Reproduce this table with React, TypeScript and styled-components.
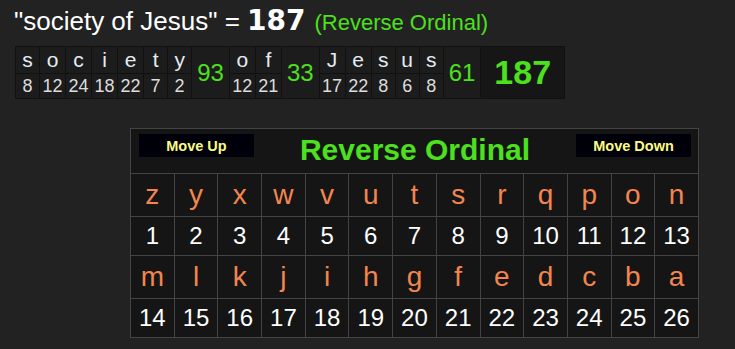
import React from 'react'
import styled, { createGlobalStyle } from 'styled-components'

const GlobalStyle = createGlobalStyle`
  body {
    margin: 0;
    background: #222222;
    font-family: "Liberation Sans", Arial, sans-serif;
  }
`

const Page = styled.div`
  display: flex;
  flex-direction: column;
  padding: 0 0 0 15px;
`

const Header = styled.div`
  display: flex;
  align-items: baseline;
  height: 39px;
  padding-top: 2px;
  color: #ffffff;
  font-size: 26px;
  line-height: 38px;
  margin-left: -1px;
  white-space: pre;
`

const Total = styled.span`
  font-family: "DejaVu Sans", "Liberation Sans", sans-serif;
  font-size: 28px;
  font-weight: bold;
`

const CipherName = styled.span`
  margin-left: 9px;
  color: #4ce01e;
  font-size: 22px;
`

const Breakdown = styled.table`
  border-collapse: collapse;
  margin-top: 5px;
  background: #1c1c1c;
  border: 1px solid #111111;

  td {
    border: 1px solid #111111;
    padding: 0 2.5px;
    text-align: center;
  }
`

const LetterCell = styled.td`
  min-width: 18px;
  height: 26px;
  color: #e4ecf2;
  font-size: 21px;
  line-height: 26px;
`

const NumberCell = styled.td`
  min-width: 18px;
  height: 24px;
  color: #dddddd;
  font-size: 18px;
  line-height: 24px;
`

const SubtotalCell = styled.td<{ $grand?: boolean }>`
  && {
    padding: ${p => (p.$grand ? '0 13px' : '0 5px')};
  }
  color: #4ce01e;
  font-size: ${p => (p.$grand ? '34px' : '24px')};
  font-weight: ${p => (p.$grand ? 'bold' : 'normal')};
  background: ${p => (p.$grand ? '#161616' : '#1c1c1c')};
`

const KeyWrap = styled.div`
  display: flex;
  padding: 29px 0 0 115px;
`

const KeyTable = styled.table`
  border-collapse: collapse;
  table-layout: fixed;
  width: 569px;
  background: #151515;
  border: 1px solid #444444;

  td {
    border: 1px solid #444444;
    padding: 0;
    text-align: center;
  }
`

const HeaderCell = styled.td`
  height: 44px;
`

const HeaderBar = styled.div`
  display: flex;
  align-items: flex-start;
  justify-content: space-between;
  box-sizing: border-box;
  height: 44px;
  padding: 5px 7px 0 8px;
`

const MoveButton = styled.div`
  display: flex;
  align-items: center;
  justify-content: center;
  width: 115px;
  height: 23px;
  background: #00000a;
  color: #fbfb84;
  font-size: 14.5px;
  font-weight: bold;
`

const Title = styled.div`
  margin-top: 1px;
  color: #4ce01e;
  font-size: 30px;
  font-weight: bold;
  line-height: 30px;
`

const KeyLetter = styled.td`
  height: 42px;
  color: #f3854f;
  font-size: 28px;
  line-height: 42px;
`

const KeyNumber = styled.td`
  height: 38px;
  color: #ffffff;
  font-size: 24px;
  line-height: 38px;
`

const words = ['society', 'of', 'Jesus']
const value = (ch: string) => 27 - (ch.toLowerCase().charCodeAt(0) - 96)

const alphabet = 'zyxwvutsrqponmlkjihgfedcba'.split('')
const rows = [alphabet.slice(0, 13), alphabet.slice(13)]

const App = () => {
  const totals = words.map(w => w.split('').reduce((s, c) => s + value(c), 0))
  const grand = totals.reduce((a, b) => a + b, 0)

  return (
    <Page>
      <GlobalStyle />
      <Header>
        <span>{'"society of Jesus" = '}</span>
        <Total>{grand}</Total>
        <CipherName>(Reverse Ordinal)</CipherName>
      </Header>

      <div>
        <Breakdown>
          <tbody>
            <tr>
              {words.map((w, i) => (
                <React.Fragment key={w}>
                  {w.split('').map((c, j) => (
                    <LetterCell key={j}>{c}</LetterCell>
                  ))}
                  <SubtotalCell rowSpan={2}>{totals[i]}</SubtotalCell>
                </React.Fragment>
              ))}
              <SubtotalCell rowSpan={2} $grand>{grand}</SubtotalCell>
            </tr>
            <tr>
              {words.map(w =>
                w.split('').map((c, j) => <NumberCell key={w + j}>{value(c)}</NumberCell>)
              )}
            </tr>
          </tbody>
        </Breakdown>
      </div>

      <KeyWrap>
        <KeyTable>
          <tbody>
            <tr>
              <HeaderCell colSpan={13}>
                <HeaderBar>
                  <MoveButton>Move Up</MoveButton>
                  <Title>Reverse Ordinal</Title>
                  <MoveButton>Move Down</MoveButton>
                </HeaderBar>
              </HeaderCell>
            </tr>
            {rows.map((row, r) => (
              <React.Fragment key={r}>
                <tr>
                  {row.map(c => (
                    <KeyLetter key={c}>{c}</KeyLetter>
                  ))}
                </tr>
                <tr>
                  {row.map(c => (
                    <KeyNumber key={c}>{value(c)}</KeyNumber>
                  ))}
                </tr>
              </React.Fragment>
            ))}
          </tbody>
        </KeyTable>
      </KeyWrap>
    </Page>
  )
}

export default App
